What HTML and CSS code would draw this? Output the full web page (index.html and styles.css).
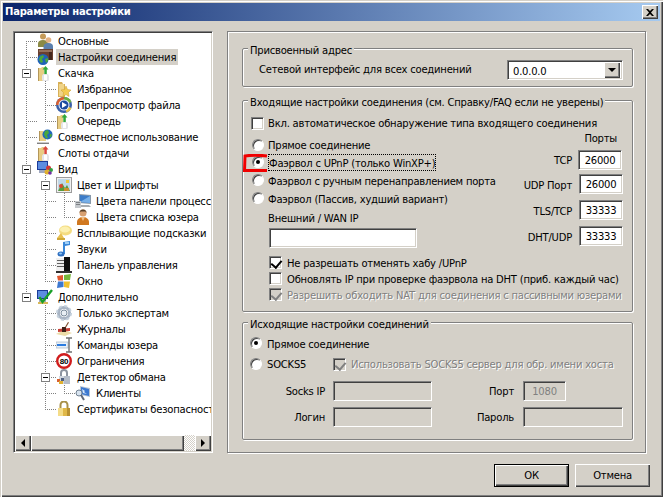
FILE: index.html
```html
<!DOCTYPE html>
<html lang="ru">
<head>
<meta charset="utf-8">
<title>Параметры настройки</title>
<link rel="stylesheet" href="styles.css">
</head>
<body>
<svg class="defs" width="0" height="0">
  <symbol id="i-users" viewBox="0 0 16 16"><circle cx="6" cy="3.500" r="3" fill="#c49a58"/><path d="M1 14v-3.500c0-2 2-3.500 5-3.500s5 1.500 5 3.500V14z" fill="#8b8a45"/><circle cx="11.500" cy="7" r="2.800" fill="#e2b184"/><path d="M6.500 16v-2.500c0-2 2-3.500 5-3.500s4.500 1.500 4.500 3.500V16z" fill="#5c80ad"/></symbol>
  <symbol id="i-conn" viewBox="0 0 16 16"><rect x="1" y="0" width="15" height="11" fill="#6a4030"/><rect x="2" y="1" width="13" height="2" fill="#95705c"/><rect x="12" y="3" width="3" height="8" fill="#44281e"/><circle cx="6" cy="10.500" r="5.500" fill="#1f62b8"/><path d="M3 7.500l3-1.500 1 2-2 2 1 3-2 1-2-3zM8 10l3-1v3l-2 2z" fill="#4aa83c"/></symbol>
  <symbol id="i-dl" viewBox="0 0 16 16"><path d="M1 3h3l1-1h2v14H1z" fill="#e8cd84"/><path d="M1 3h1v13H1z" fill="#b4975a"/><path d="M6 9h5l1 2v4l-1 1H6l-1-1v-4z" fill="#e4e4e8"/><path d="M7 10h3v5H7z" fill="#fff"/><path d="M8.500 1l3 3.500H9.800V9H7.300V4.500H5.500z" fill="#32a83a"/></symbol>
  <symbol id="i-up" viewBox="0 0 16 16"><path d="M1 3h3l1-1h2v14H1z" fill="#e8cd84"/><path d="M1 3h1v13H1z" fill="#b4975a"/><path d="M6 9h5l1 2v4l-1 1H6l-1-1v-4z" fill="#e4e4e8"/><path d="M7 10h3v5H7z" fill="#fff"/><path d="M8.500 1l3 3.500H9.800V9H7.300V4.500H5.500z" fill="#d8483c"/></symbol>
  <symbol id="i-fav" viewBox="0 0 16 16"><path d="M2 1h4l1 2h2v13H2z" fill="#d8b058"/><path d="M3 3h5v12H3z" fill="#f0d488"/><path d="M10 5l1.500 3.500L15 9l-2.500 2.500.5 4-3-2-3 2 .5-4L5 9l3.500-.500z" fill="#f4cc50" stroke="#c89a30" stroke-width=".5"/></symbol>
  <symbol id="i-play" viewBox="0 0 16 16"><circle cx="8" cy="8" r="8" fill="#3a60a8"/><path d="M8 0a8 8 0 0 1 7.500 5L8 8z" fill="#6cb040"/><path d="M0 8a8 8 0 0 1 8-8L8 8z" fill="#d86030"/><path d="M15.500 11a8 8 0 0 1-5 4.600L8 8z" fill="#e8c040"/><circle cx="8" cy="8" r="5.500" fill="#e8eef8"/><circle cx="8" cy="8" r="4.500" fill="#1c4aa0"/><path d="M6 5l5 3-5 3z" fill="#fff"/></symbol>
  <symbol id="i-share" viewBox="0 0 16 16"><path d="M2 2h4l1 1h2v9H2z" fill="#e8cd84"/><path d="M2 2h1v10H2z" fill="#b4975a"/><circle cx="10.500" cy="5.500" r="5" fill="#2268bc"/><path d="M8 2l3-1 1 3-2 2 1 3-2 .5-2-4zM13 5l2 .5-1 3-1.500-1z" fill="#4aa83c"/><rect x="0" y="13" width="12" height="2" fill="#808080"/><rect x="0" y="13" width="12" height="1" fill="#c8c8c8"/></symbol>
  <symbol id="i-view" viewBox="0 0 16 16"><rect x="0" y="0" width="11" height="9" fill="#1c3c98"/><rect x="1" y="1" width="9" height="7" fill="#5c8ce0"/><rect x="2" y="9" width="7" height="3" fill="#a0a8c0"/><circle cx="11.500" cy="7" r="2.500" fill="#d03838"/><circle cx="14" cy="9" r="2" fill="#30a040"/><circle cx="10" cy="11" r="2.500" fill="#e0b030"/><circle cx="13" cy="12" r="1.800" fill="#7030a0"/></symbol>
  <symbol id="i-color" viewBox="0 0 16 16"><rect x=".5" y=".5" width="15" height="15" fill="#f0f0f0" stroke="#9c9c9c"/><rect x="2" y="2" width="12" height="12" fill="#c0d8e8"/><path d="M2 14l4-8 3 5 2-3 3 6z" fill="#5a9a3c"/><circle cx="5" cy="9" r="2" fill="#d84830"/><rect x="10" y="3" width="3" height="3" fill="#f0c838"/><rect x="8" y="11" width="5" height="3" fill="#c89030"/></symbol>
  <symbol id="i-mon" viewBox="0 0 16 16"><path d="M4 1l12 1v9L4 10z" fill="#8898a8"/><path d="M5 2l10 1v7L5 9z" fill="#3c7cc8"/><path d="M5 9l10-6v7z" fill="#78b0e8"/><path d="M0 8h6v7H0z" fill="#c4c8cc"/><path d="M1 9h4v1H1zM1 11h4v1H1z" fill="#7c8084"/><path d="M6 12h8l2 2H6z" fill="#a8acb0"/></symbol>
  <symbol id="i-user" viewBox="0 0 16 16"><circle cx="8" cy="4" r="3.500" fill="#d8a070"/><path d="M4.500 4a3.500 3.500 0 0 1 7 0l-1-1.500h-5z" fill="#584028"/><path d="M2 16v-3c0-3 3-5 6-5s6 2 6 5v3z" fill="#d07820"/><path d="M6 8h4l-2 4z" fill="#f0c088"/></symbol>
  <symbol id="i-tip" viewBox="0 0 16 16"><ellipse cx="9.500" cy="5.500" rx="6.500" ry="5" fill="#f4dc80"/><ellipse cx="9" cy="4.500" rx="5" ry="3" fill="#fcf0b0"/><path d="M5 8L1 13h7z" fill="#e8c050"/><rect x="1" y="13" width="8" height="2" fill="#d0a838"/></symbol>
  <symbol id="i-note" viewBox="0 0 16 16"><path d="M7 1l7-1v4L9 5v8H7z" fill="#3c88d8"/><path d="M9 1h4v2H9z" fill="#a0d0f8"/><ellipse cx="5" cy="13" rx="3.500" ry="2.500" fill="#3070c0"/><ellipse cx="4.500" cy="12.500" rx="1.500" ry="1" fill="#90c8f8"/></symbol>
  <symbol id="i-panel" viewBox="0 0 16 16"><rect x="0" y="1" width="10" height="13" fill="#f0f0f0"/><path d="M1 3h7v1H1zM1 6h7v1H1zM1 9h7v1H1z" fill="#606060"/><rect x="8" y="0" width="6" height="15" fill="#101010"/><rect x="0" y="14" width="16" height="2" fill="#303030"/></symbol>
  <symbol id="i-win" viewBox="0 0 16 16"><path d="M1 3l6-1v5.500H2z" fill="#e05830"/><path d="M8 2l7-1-1 6H8z" fill="#78b83c"/><path d="M2 8.500h5.500V14L1 15z" fill="#3c78d0"/><path d="M8 8.500h6L13 15l-5-1z" fill="#f0c030"/></symbol>
  <symbol id="i-adv" viewBox="0 0 16 16"><rect x="0" y="1" width="11" height="9" fill="#1c3c98"/><rect x="1" y="2" width="9" height="7" fill="#5c8ce0"/><rect x="2" y="10" width="7" height="3" fill="#a8aec0"/><rect x="1" y="13" width="10" height="2" fill="#d8b858"/><path d="M2.500 8l3 5L15 1" fill="none" stroke="#18a028" stroke-width="2.400"/></symbol>
  <symbol id="i-gear" viewBox="0 0 16 16"><circle cx="8" cy="8" r="5.500" fill="none" stroke="#a8b4c4" stroke-width="3"/><circle cx="8" cy="8" r="7" fill="none" stroke="#c4d0dc" stroke-width="2" stroke-dasharray="3 2.500"/><circle cx="8" cy="8" r="3" fill="#e8eef4" stroke="#7c8c9c"/></symbol>
  <symbol id="i-log" viewBox="0 0 16 16"><path d="M0 13l8-4 8 3-7 3z" fill="#ecdca8"/><path d="M2 8l12-1v3l-12 1z" fill="#c84038"/><rect x="6" y="6" width="4" height="5" fill="#402018"/><path d="M9 6l3-5 1 .5-3 5z" fill="#805030"/></symbol>
  <symbol id="i-cmd" viewBox="0 0 16 16"><rect x="0" y="5" width="12" height="6" fill="#e8f0f8" stroke="#98a8b8" stroke-width=".6"/><rect x="1" y="7" width="9" height="2" fill="#2c7ce0"/><path d="M10 1h6M13 1v14M10 15h6" fill="none" stroke="#707070" stroke-width="1.400"/></symbol>
  <symbol id="i-lim" viewBox="0 0 16 16"><circle cx="8" cy="8" r="6.800" fill="#fff" stroke="#d01c1c" stroke-width="2.400"/></symbol>
  <symbol id="i-det" viewBox="0 0 16 16"><path d="M5 7V4a3 3 0 0 1 6 0v3" fill="none" stroke="#8c94a0" stroke-width="2"/><rect x="3" y="7" width="11" height="8" fill="#b4bcc8"/><rect x="3" y="7" width="5" height="8" fill="#d0d6de"/><rect x="1" y="10" width="3" height="3" fill="#d86030"/><rect x="3" y="12" width="4" height="3" fill="#e0b030"/><rect x="5" y="9" width="3" height="3" fill="#506080"/></symbol>
  <symbol id="i-cli" viewBox="0 0 16 16"><path d="M5 1l10 2v9L5 10z" fill="#b8c4d4"/><path d="M6 2l8 2v7L6 9z" fill="#3c78d0"/><path d="M7 4l3 2-1 1 3 2-4-1z" fill="#d8e8f8"/><circle cx="4" cy="8" r="3" fill="#d8e4f0" stroke="#708090"/><path d="M6 10l3 5" stroke="#606878" stroke-width="2"/></symbol>
  <symbol id="i-lock" viewBox="0 0 16 16"><path d="M4.500 7V4a3.500 3.500 0 0 1 7 0v3" fill="none" stroke="#a89048" stroke-width="2"/><rect x="2" y="7" width="12" height="8" fill="#e0b848"/><rect x="2" y="7" width="5" height="8" fill="#f4dc88"/><rect x="11" y="7" width="3" height="8" fill="#b89030"/></symbol>
</svg>

<div class="window">
  <header class="titlebar">
    <span class="title">Параметры настройки</span>
    <span class="close"><svg width="8" height="7" viewBox="0 0 8 7"><path d="M0 0h2l2 2 2-2h2L5 3.500 8 7H6L4 5 2 7H0l3-3.500z" fill="#000"/></svg></span>
  </header>

  <div class="content">
    <div class="main">
      <div class="tree">
        <div class="tree-list">
          <svg class="guides" width="196" height="403">
            <path d="M11.500 8V264M11 8.500h11M11 24.500h11M11 88.500h11M11 104.500h11M30.500 40V88M30 56.500h11M30 72.500h11M30 88.500h11M30.500 136V248M30 168.500h11M30 184.500h11M30 200.500h11M30 216.500h11M30 232.500h11M30 248.500h11M30.500 264V376M30 280.500h11M30 296.500h11M30 312.500h11M30 328.500h11M30 344.500h11M30 360.500h11M30 376.500h11M49.500 152V184M49 168.500h11M49 184.500h11M49.500 344V360M49 360.500h11" fill="none" stroke="#808080" stroke-dasharray="1 1"/>
          </svg>
          <div class="row l0"><span class="slot"></span><svg class="ico"><use href="#i-users"/></svg><span class="lbl">Основные</span></div>
          <div class="row l0"><span class="slot"></span><svg class="ico"><use href="#i-conn"/></svg><span class="lbl sel">Настройки соединения</span></div>
          <div class="row l0"><span class="slot"><i class="exp"></i></span><svg class="ico"><use href="#i-dl"/></svg><span class="lbl">Скачка</span></div>
          <div class="row l1"><span class="slot"></span><svg class="ico"><use href="#i-fav"/></svg><span class="lbl">Избранное</span></div>
          <div class="row l1"><span class="slot"></span><svg class="ico"><use href="#i-play"/></svg><span class="lbl">Препросмотр файла</span></div>
          <div class="row l1"><span class="slot"></span><svg class="ico"><use href="#i-dl"/></svg><span class="lbl">Очередь</span></div>
          <div class="row l0"><span class="slot"></span><svg class="ico"><use href="#i-share"/></svg><span class="lbl">Совместное использование</span></div>
          <div class="row l0"><span class="slot"></span><svg class="ico"><use href="#i-up"/></svg><span class="lbl">Слоты отдачи</span></div>
          <div class="row l0"><span class="slot"><i class="exp"></i></span><svg class="ico"><use href="#i-view"/></svg><span class="lbl">Вид</span></div>
          <div class="row l1"><span class="slot"><i class="exp"></i></span><svg class="ico"><use href="#i-color"/></svg><span class="lbl">Цвет и Шрифты</span></div>
          <div class="row l2"><span class="slot"></span><svg class="ico"><use href="#i-mon"/></svg><span class="lbl">Цвета панели процесса</span></div>
          <div class="row l2"><span class="slot"></span><svg class="ico"><use href="#i-user"/></svg><span class="lbl">Цвета списка юзера</span></div>
          <div class="row l1"><span class="slot"></span><svg class="ico"><use href="#i-tip"/></svg><span class="lbl">Всплывающие подсказки</span></div>
          <div class="row l1"><span class="slot"></span><svg class="ico"><use href="#i-note"/></svg><span class="lbl">Звуки</span></div>
          <div class="row l1"><span class="slot"></span><svg class="ico"><use href="#i-panel"/></svg><span class="lbl">Панель управления</span></div>
          <div class="row l1"><span class="slot"></span><svg class="ico"><use href="#i-win"/></svg><span class="lbl">Окно</span></div>
          <div class="row l0"><span class="slot"><i class="exp"></i></span><svg class="ico"><use href="#i-adv"/></svg><span class="lbl">Дополнительно</span></div>
          <div class="row l1"><span class="slot"></span><svg class="ico"><use href="#i-gear"/></svg><span class="lbl">Только экспертам</span></div>
          <div class="row l1"><span class="slot"></span><svg class="ico"><use href="#i-log"/></svg><span class="lbl">Журналы</span></div>
          <div class="row l1"><span class="slot"></span><svg class="ico"><use href="#i-cmd"/></svg><span class="lbl">Команды юзера</span></div>
          <div class="row l1"><span class="slot"></span><svg class="ico" viewBox="0 0 16 16"><use href="#i-lim"/><text class="ico-text" x="8" y="11">80</text></svg><span class="lbl">Ограничения</span></div>
          <div class="row l1"><span class="slot"><i class="exp"></i></span><svg class="ico"><use href="#i-det"/></svg><span class="lbl">Детектор обмана</span></div>
          <div class="row l2"><span class="slot"></span><svg class="ico"><use href="#i-cli"/></svg><span class="lbl">Клиенты</span></div>
          <div class="row l1"><span class="slot"></span><svg class="ico"><use href="#i-lock"/></svg><span class="lbl">Сертификаты безопасности</span></div>
        </div>
        <div class="hscroll">
          <span class="sbtn"><i class="arrow-left"></i></span>
          <span class="thumb"></span>
          <span class="track"></span>
          <span class="sbtn"><i class="arrow-right"></i></span>
        </div>
      </div>

      <div class="panel">
        <section class="group g1">
          <span class="legend">Присвоенный адрес</span>
          <span class="g1-label">Сетевой интерфейс для всех соединений</span>
          <div class="combo"><span class="combo-val">0.0.0.0</span><span class="combo-btn"><i class="arrow-down"></i></span></div>
        </section>

        <section class="group g2">
          <span class="legend">Входящие настройки соединения (см. Справку/FAQ если не уверены)</span>
          <label class="opt opt-auto"><i class="check"></i><span>Вкл. автоматическое обнаружение типа входящего соединения</span></label>
          <div class="cols">
            <div class="col-left">
              <div class="radio-row first"><i class="radio"></i><span>Прямое соединение</span></div>
              <div class="radio-row"><i class="radio on"></i><span class="focus">Фаэрвол с UPnP (только WinXP+)</span></div>
              <div class="radio-row"><i class="radio"></i><span>Фаэрвол с ручным перенаправлением порта</span></div>
              <div class="radio-row"><i class="radio"></i><span>Фаэрвол (Пассив, худший вариант)</span></div>
              <div class="wan-label">Внешний / WAN IP</div>
              <div class="field wan-input"></div>
            </div>
            <div class="col-right">
              <div class="ports-title">Порты</div>
              <div class="port tcp"><span>TCP</span><div class="field port-input">26000</div></div>
              <div class="port udp"><span>UDP Порт</span><div class="field port-input">26000</div></div>
              <div class="port"><span>TLS/TCP</span><div class="field port-input">33333</div></div>
              <div class="port"><span>DHT/UDP</span><div class="field port-input">33333</div></div>
            </div>
          </div>
          <div class="checks">
            <label class="opt"><i class="check on"></i><span>Не разрешать отменять хабу /UPnP</span></label>
            <label class="opt"><i class="check"></i><span>Обновлять IP при проверке фаэрвола на DHT (приб. каждый час)</span></label>
            <label class="opt off"><i class="check on off"></i><span>Разрешить обходить NAT для соединения с пассивными юзерами</span></label>
          </div>
        </section>

        <section class="group g3">
          <span class="legend">Исходящие настройки соединений</span>
          <div class="out-row first"><i class="radio on"></i><span>Прямое соединение</span></div>
          <div class="out-row second">
            <span class="socks"><i class="radio"></i><span>SOCKS5</span></span>
            <label class="opt off"><i class="check on off"></i><span>Использовать SOCKS5 сервер для обр. имени хоста</span></label>
          </div>
          <div class="socks-grid">
            <span class="flabel">Socks IP</span><div class="field dis"></div>
            <span class="flabel pr9">Порт</span><div class="field dis short">1080</div>
            <span class="flabel">Логин</span><div class="field dis"></div>
            <span class="flabel pr9">Пароль</span><div class="field dis"></div>
          </div>
        </section>
      </div>
    </div>

    <footer class="buttons">
      <button class="btn default" type="button">ОК</button>
      <button class="btn" type="button">Отмена</button>
    </footer>
  </div>

  <svg class="mark" width="26" height="20" viewBox="0 0 26 20"><path d="M24 2C16 1 8 1 2 2L1.500 16.500 24 16.500" fill="none" stroke="#f00000" stroke-width="3"/></svg>
</div>
</body>
</html>
```

FILE: styles.css
```css
* { box-sizing: border-box; }
html, body { margin: 0; padding: 0; }
body {
  width: 663px;
  height: 497px;
  overflow: hidden;
  background: #d4d0c8;
  font: 10px/13px "DejaVu Sans", sans-serif;
  letter-spacing: -0.22px;
  color: #000;
}
.defs { position: absolute; }
i { display: block; font-style: normal; flex: none; }

.window {
  position: relative;
  width: 663px;
  height: 497px;
  background: #d4d0c8;
  padding: 3px;
  box-shadow: inset 1px 1px 0 #d4d0c8, inset 2px 2px 0 #fff, inset -1px -1px 0 #404040, inset -2px -2px 0 #808080;
}

.titlebar {
  height: 18px;
  display: flex;
  align-items: center;
  justify-content: space-between;
  padding: 0 2px;
  background: linear-gradient(90deg, #0a246a, #a6caf0);
}
.title { color: #fff; font: bold 10px/18px "DejaVu Sans", sans-serif; }
.close {
  width: 16px;
  height: 14px;
  display: flex;
  align-items: center;
  justify-content: center;
  background: #d4d0c8;
  box-shadow: inset 1px 1px 0 #fff, inset -1px -1px 0 #404040, inset -2px -2px 0 #808080;
}

.content { padding: 10px 10px 0; }
.main { display: flex; gap: 14px; }

/* tree */
.tree {
  width: 200px;
  height: 422px;
  display: flex;
  flex-direction: column;
  border: 1px solid;
  border-color: #808080 #fff #fff #808080;
  box-shadow: inset 1px 1px 0 #404040, inset -1px -1px 0 #d4d0c8;
  padding: 1px;
  background: #fff;
}
.tree-list {
  position: relative;
  height: 402px;
  overflow: hidden;
  background: #fff;
}
.guides { position: absolute; left: 0; top: 0; shape-rendering: crispEdges; }
.row {
  position: relative;
  height: 16px;
  display: flex;
  align-items: center;
  white-space: nowrap;
}
.l0 { padding-left: 7px; }
.l1 { padding-left: 26px; }
.l2 { padding-left: 45px; }
.slot { width: 15px; height: 16px; display: flex; align-items: center; flex: none; }
.exp {
  position: relative;
  width: 9px;
  height: 9px;
  border: 1px solid #808080;
  background: #fff;
}
.exp::after {
  content: "";
  position: absolute;
  left: 1px;
  top: 3px;
  width: 5px;
  height: 1px;
  background: #000;
}
.ico { width: 16px; height: 16px; flex: none; }
.ico-text { font: bold 8px "Liberation Sans", sans-serif; text-anchor: middle; fill: #000; }
.lbl { margin-left: 3px; padding: 0 2px; height: 16px; line-height: 18px; }
.sel { background: #d4d0c8; }

.hscroll { height: 16px; display: flex; flex: none; }
.sbtn, .thumb {
  background: #d4d0c8;
  box-shadow: inset 1px 1px 0 #fff, inset -1px -1px 0 #404040, inset -2px -2px 0 #808080;
}
.sbtn { width: 16px; display: flex; align-items: center; justify-content: center; flex: none; }
.thumb { width: 153px; flex: none; }
.track {
  flex: 1;
  background: repeating-conic-gradient(#d4d0c8 0 25%, #fff 0 50%) 0 0 / 2px 2px;
}
.arrow-left { border: 4px solid transparent; border-left: 0; border-right-color: #000; }
.arrow-right { border: 4px solid transparent; border-right: 0; border-left-color: #000; }
.arrow-down { border: 4px solid transparent; border-bottom: 0; border-top-color: #000; }

/* right panel */
.panel {
  width: 419px;
  height: 422px;
  padding: 16px 0 0 14px;
  border: 1px solid #808080;
  box-shadow: 1px 1px 0 #fff, inset 1px 1px 0 #fff;
}
.group {
  position: relative;
  width: 391px;
  border: 1px solid #808080;
  border-radius: 2px;
  box-shadow: 1px 1px 0 #fff, inset 1px 1px 0 #fff;
}
.legend {
  position: absolute;
  left: 5px;
  top: -5px;
  padding: 0 2px;
  background: #d4d0c8;
  white-space: nowrap;
}
.g1 {
  height: 39px;
  margin-bottom: 13px;
  padding: 11px 9px 0 16px;
  display: flex;
  align-items: flex-start;
  justify-content: space-between;
}
.g1-label { line-height: 20px; }
.combo {
  width: 116px;
  height: 20px;
  display: flex;
  align-items: center;
  justify-content: space-between;
  padding: 2px;
  background: #fff;
  border: 1px solid;
  border-color: #808080 #fff #fff #808080;
  box-shadow: inset 1px 1px 0 #404040, inset -1px -1px 0 #d4d0c8;
}
.combo-val { padding: 2px 0 0 3px; }
.combo-btn {
  width: 16px;
  height: 16px;
  display: flex;
  align-items: center;
  justify-content: center;
  background: #d4d0c8;
  box-shadow: inset 1px 1px 0 #fff, inset -1px -1px 0 #404040, inset -2px -2px 0 #808080;
}

.g2 { height: 212px; margin-bottom: 10px; padding-top: 16px; }
.opt { display: flex; align-items: center; gap: 5px; white-space: nowrap; }
.opt-auto { height: 13px; padding-left: 8px; gap: 4px; }
.checks .opt span { padding-top: 2px; }
.off { color: #808080; text-shadow: 1px 1px 0 #fff; }
.check {
  position: relative;
  width: 13px;
  height: 13px;
  background: #fff;
  border: 1px solid;
  border-color: #808080 #fff #fff #808080;
  box-shadow: inset 1px 1px 0 #404040, inset -1px -1px 0 #d4d0c8;
}
.check.on::after {
  content: "";
  position: absolute;
  left: 3px;
  top: 1px;
  width: 5px;
  height: 8px;
  border: solid #000;
  border-width: 0 2px 2px 0;
  transform: rotate(40deg);
}
.check.off { background: #d4d0c8; }
.check.off::after { border-color: #808080; }

.cols { display: flex; justify-content: space-between; height: 118px; }
.col-left { padding: 6px 0 0 9px; }
.radio-row { display: flex; align-items: center; gap: 4px; height: 18px; white-space: nowrap; }
.radio-row.first { height: 17px; }
.radio-row span { padding-top: 2px; }
.radio {
  position: relative;
  width: 12px;
  height: 12px;
  border-radius: 50%;
  background: #fff;
  border: 1px solid;
  border-color: #808080 #fff #fff #808080;
  box-shadow: inset 1px 1px 0 #404040;
}
.radio.on::after {
  content: "";
  position: absolute;
  left: 3px;
  top: 3px;
  width: 4px;
  height: 4px;
  border-radius: 50%;
  background: #000;
}
.radio-row .focus { outline: 1px dotted #000; outline-offset: -1px; padding: 3px 1px 1px; line-height: 13px; }
.wan-label { margin-top: 4px; line-height: 16px; height: 14px; padding-left: 16px; }
.field {
  height: 20px;
  background: #fff;
  border: 1px solid;
  border-color: #808080 #fff #fff #808080;
  box-shadow: inset 1px 1px 0 #404040, inset -1px -1px 0 #d4d0c8;
  line-height: 20px;
}
.wan-input { width: 148px; margin: 3px 0 0 17px; }
.col-right { padding: 0 9px 0 0; display: flex; flex-direction: column; align-items: flex-end; }
.ports-title { height: 14px; line-height: 18px; padding-right: 6px; margin-bottom: 6px; }
.port { display: flex; align-items: center; gap: 7px; height: 20px; margin-bottom: 6px; }
.port span { padding-top: 2px; }
.port.tcp { margin-bottom: 4px; margin-right: 1px; gap: 6px; }
.port.tcp span { padding-top: 0; }
.port-input { width: 44px; text-align: center; }
.checks { margin-top: 6px; padding-left: 26px; }
.checks .opt { height: 16px; }

.g3 { height: 118px; padding-top: 11px; }
.out-row { display: flex; align-items: center; gap: 5px; padding-left: 7px; white-space: nowrap; }
.out-row.first { height: 18px; }
.out-row.first span { padding-top: 2px; }
.out-row.second { height: 16px; margin-top: 4px; gap: 0; }
.socks { display: flex; align-items: center; gap: 5px; width: 83px; }
.socks-grid {
  display: grid;
  grid-template-columns: 90px 99px 91px 100px;
  row-gap: 6px;
  margin-top: 9px;
}
.flabel { text-align: right; padding-right: 8px; line-height: 22px; height: 20px; }
.flabel.pr9 { padding-right: 9px; }
.dis { background: #d4d0c8; color: #808080; text-align: center; }
.short { width: 43px; }

/* footer */
.buttons { display: flex; justify-content: flex-end; gap: 6px; margin-top: 11px; }
.btn {
  width: 75px;
  height: 23px;
  padding: 0;
  font: inherit;
  letter-spacing: inherit;
  color: #000;
  background: #d4d0c8;
  border: 0;
  box-shadow: inset 1px 1px 0 #fff, inset -1px -1px 0 #404040, inset -2px -2px 0 #808080;
}
.btn.default {
  box-shadow: inset 0 0 0 1px #000, inset 2px 2px 0 #fff, inset -2px -2px 0 #404040, inset -3px -3px 0 #808080;
}

.mark { position: absolute; left: 243px; top: 154px; }
```
